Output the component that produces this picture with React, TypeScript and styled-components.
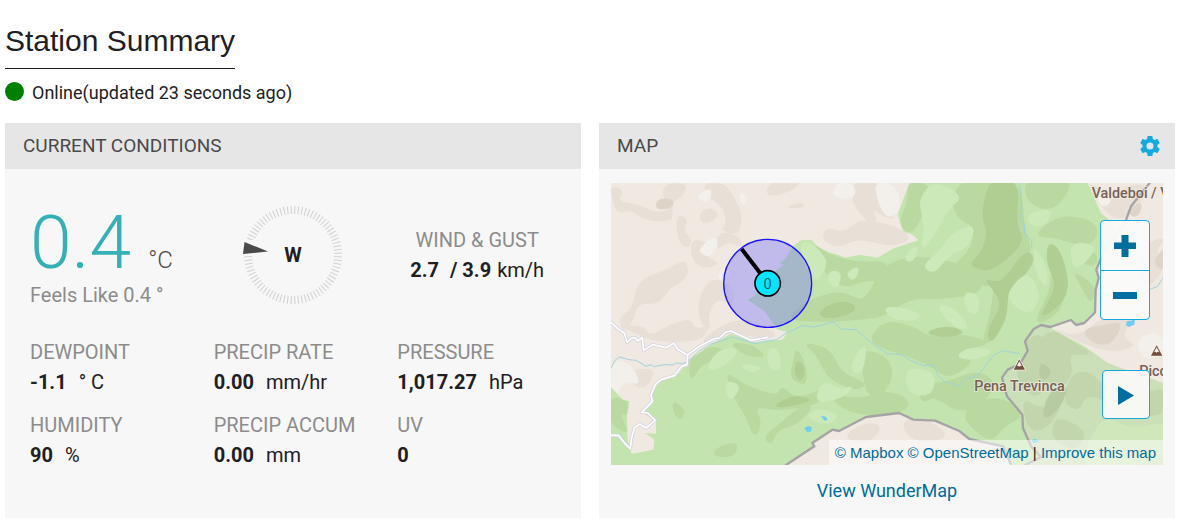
import React from "react";
import styled, { createGlobalStyle } from "styled-components";

const GlobalStyle = createGlobalStyle`
  *, *::before, *::after { box-sizing: border-box; }
  body {
    margin: 0;
    background: #fff;
    color: #1e2023;
    font-family: Roboto, "Liberation Sans", sans-serif;
  }
`;

const Page = styled.main`
  padding: 20px 5px 7px;
`;

const Title = styled.h1`
  display: inline-block;
  margin: 0;
  padding-bottom: 6px;
  border-bottom: 1px solid #1e2023;
  font: 400 30px/42px "Liberation Sans", Arial, sans-serif;
`;

const Status = styled.p`
  display: flex;
  align-items: flex-start;
  gap: 8px;
  margin: 12px 0 18px;
  font-size: 18px;
  line-height: 24px;
`;

const StatusDot = styled.span`
  width: 19px;
  height: 19px;
  margin-top: 1px;
  border-radius: 50%;
  background: #008000;
`;

const Panels = styled.div`
  display: grid;
  grid-template-columns: 1fr 1fr;
  gap: 18px;
`;

const Panel = styled.section`
  background: #f7f7f7;
`;

const PanelHeader = styled.header`
  display: flex;
  align-items: center;
  justify-content: space-between;
  height: 46px;
  padding: 0 13px 0 18px;
  background: #e6e6e6;
`;

const PanelTitle = styled.h2`
  margin: 0;
  color: #4a4a4a;
  font-size: 19px;
  font-weight: 400;
  line-height: 24px;
`;

const IconButton = styled.button`
  display: flex;
  padding: 0;
  border: 0;
  background: none;
  color: #15a9e0;
  cursor: pointer;
`;

const Conditions = styled.div`
  display: grid;
  grid-template-columns: repeat(3, 1fr);
  row-gap: 13px;
  padding: 31px 0 48px 25px;
`;

const Temperature = styled.div`
  display: flex;
  flex-direction: column;
  height: 124px;
`;

const TempReading = styled.div`
  display: flex;
  align-items: baseline;
  gap: 17px;
  height: 80px;
  color: #35b0b5;
  font-size: 75px;
  font-weight: 300;
  line-height: 84px;
  white-space: nowrap;
`;

const TempUnit = styled.span`
  color: #4a4a4a;
  font-size: 24px;
  line-height: 24px;
`;

const Label = styled.div`
  color: #8c8c8c;
  font-size: 20px;
  line-height: 30px;
`;

const Value = styled.div<{ $centered?: boolean; $gap: number }>`
  display: flex;
  justify-content: ${(p) => (p.$centered ? "center" : "flex-start")};
  gap: ${(p) => p.$gap}px;
  font-size: 20px;
  line-height: 30px;
  white-space: pre;
`;

const CompassCell = styled.div`
  padding-left: 24px;
`;

const Wind = styled.div`
  padding: 25px 24px 0 0;
  text-align: center;
`;

const MapBody = styled.div`
  padding: 14px 12px 14px;
`;

const MapFrame = styled.div`
  position: relative;
  overflow: hidden;
  height: 282px;
`;

const MapDrawing = styled.svg`
  display: block;
  width: 100%;
  height: 100%;
`;

const ZoomControls = styled.div`
  position: absolute;
  top: 37px;
  right: 13px;
  width: 50px;
  border: 1px solid #15a9e0;
  border-radius: 4px;
  background: rgba(250, 250, 250, 0.96);
`;

const MapButton = styled.button`
  display: flex;
  align-items: center;
  justify-content: center;
  width: 100%;
  height: 49px;
  padding: 0;
  border: 0;
  background: none;
  color: #006fa0;
  cursor: pointer;

  & + & {
    border-top: 1px solid #15a9e0;
  }
`;

const PlayButton = styled(MapButton)`
  position: absolute;
  top: 187px;
  right: 13px;
  width: 48px;
  border: 1px solid #15a9e0;
  border-radius: 4px;
  background: rgba(250, 250, 247, 0.94);
`;

const Attribution = styled.div`
  position: absolute;
  right: 0;
  bottom: 0;
  padding: 0 7px 0 6px;
  background: rgba(255, 255, 255, 0.5);
  font: 15px/25px "Liberation Sans", Arial, sans-serif;
`;

const Link = styled.a`
  color: #006c9b;
  text-decoration: none;
`;

const MapFooter = styled.div`
  padding-top: 12px;
  font-size: 18px;
  line-height: 27px;
  text-align: center;
`;

const readings = [
  { label: "DEWPOINT", value: "-1.1", unit: "° C" },
  { label: "PRECIP RATE", value: "0.00", unit: "mm/hr" },
  { label: "PRESSURE", value: "1,017.27", unit: "hPa" },
  { label: "HUMIDITY", value: "90", unit: "%" },
  { label: "PRECIP ACCUM", value: "0.00", unit: "mm" },
  { label: "UV", value: "0", unit: "" },
];

const TICKS = 80;

function Compass() {
  return (
    <svg width="110" height="110" viewBox="0 0 110 110" role="img" aria-label="Wind from W">
      {Array.from({ length: TICKS }, (_, i) => (
        <line
          key={i}
          x1="55"
          y1="6"
          x2="55"
          y2="14"
          stroke="#d0d0d0"
          transform={`rotate(${((i + 0.5) * 360) / TICKS} 55 55)`}
        />
      ))}
      <path d="M2 40h16l12 11-12 5H2z" fill="#f7f7f7" />
      <path d="M6.5 42 30 51.5 5 54z" fill="#4a4a4a" />
      <text x="55" y="62" textAnchor="middle" fontSize="20" fontWeight="700" fill="#1e2023">
        W
      </text>
    </svg>
  );
}

const FOREST =
  "M895 0 860 95 876 145 905 155 922 172 850 195 800 224 745 215 705 224 650 206 620 190 600 170 570 172 545 190 525 225 505 240 518 245 495 262 430 340 410 350 460 385 485 420 500 440 530 447 515 470 430 478 360 452 300 485 230 535 205 570 150 595 120 630 122 655 95 688 135 715 135 752 102 750 130 770 128 800 62 812 50 770 48 700 55 655 35 650 0 612V846H525L608 790 604 780 664 740 684 744 765 702 828 693 864 690 907 708 972 712 1040 742 1075 767 1177 790 1198 846H1656V600L1600 580 1550 565 1490 540 1420 490 1320 436 1378 411 1395 425 1420 420 1452 390 1454 320 1463 285 1456 260 1467 220 1520 170 1500 115 1470 90 1430 0Z";

const PARK =
  "M1320 436 1290 430 1268 438 1242 475 1250 503 1228 542 1190 560 1173 584 1188 640 1234 695 1236 735 1260 790 1290 822 1242 846H1656V600L1490 540Z";

const BORDER =
  "M525 846 610 790 604 780 664 740 684 744 765 702 864 690 907 710 972 713 1045 744 1075 768 1177 790 1200 846M1616 0 1560 70 1540 125 1480 200 1456 260 1463 285 1454 320 1452 388 1420 420 1395 426 1380 411 1318 432 1290 426 1268 438 1242 475 1250 503 1228 542 1190 560 1173 584 1188 640 1234 695 1236 735 1260 790 1290 822 1242 846";

const ROADS =
  "M470 463 420 472 360 444 345 447 325 465 310 467 265 490 230 515 228 545 212 550 190 578 150 590 133 605 120 635 124 655 92 688 110 690 133 712 105 735 86 723 70 735 62 765 58 797 45 785 22 757 0 757M0 418 20 437 40 450 48 478 62 465 74 465 80 474 94 464 98 502 125 485 165 494 188 480 200 498 228 516";

const STREAMS =
  "M0 556 12 532 25 522 55 530 75 532 105 550 120 545 130 551 160 545 185 546 195 540 215 542 232 534 265 504 300 483 365 462 410 475 430 482 455 476 497 470 525 450 575 428 610 432 668 417 690 438 735 440 775 475 828 512 870 515 895 530 935 548 968 546 980 575 1000 595 1045 610 1070 585 1100 578 1150 515 1175 503 1225 512M1222 0 1230 25 1233 80 1226 108 1240 125 1240 148 1262 175 1262 195M1656 285 1640 310 1610 322 1580 345 1560 400";

/* Terrain shading: every string is one closed outline, drawn with rounded corners. */
const SAND_SHADE = [
  "0 40 0 8 40 20 20 55 90 65 130 90 180 80 150 30 170 0 230 0 215 40 180 60 190 110 140 118 90 105 60 80 20 95",
  "275 0 290 40 340 75 345 130 325 140 385 160 395 85 360 30 340 0",
  "195 90 235 110 215 140 245 170 230 200 198 170",
  "260 95 295 70 330 95 280 130",
  "470 0 465 40 515 35 570 5 555 -10",
  "720 0 725 70 795 140 795 90 760 45 780 -10",
  "735 0 765 70 845 115 850 90 800 40 800 -10",
  "540 65 575 58 582 76 525 76",
  "645 130 700 150 740 110 830 120 910 160 850 195 740 165 690 195 630 175",
  "80 290 170 260 225 225 235 285 175 315 145 365 80 360 70 410 35 450 22 405 65 375",
  "320 145 385 155 395 195 350 175 315 205",
  "240 165 300 180 280 220 330 240 280 260 240 230",
  "300 280 370 310 370 370 315 345 290 400 300 440 265 420 260 350",
  "25 430 95 425 115 460 175 425 240 405 250 440 300 425 275 470 210 478 130 475 90 460",
  "270 470 350 415 410 410 470 430 505 465 420 466 360 440 290 485",
  "50 560 140 555 105 620 60 605",
  "1430 -10 1500 45 1560 0 1620 10 1575 80 1520 120 1450 50",
  "1670 160 1630 210 1670 250 1600 330 1580 250 1600 180",
  "1310 430 1400 465 1480 395 1570 405 1530 460 1580 490 1500 510 1410 480",
  "890 700 960 715 1020 760 930 785 870 740",
  "690 765 760 715 820 730 770 785",
];

const SAND_LIGHT = [
  "270 25 305 15 295 60 258 50",
  "390 25 410 40 403 70 385 50",
  "655 35 690 -10 740 15 720 55",
  "790 -10 860 10 870 80 830 110 800 60",
  "265 195 305 160 325 175 300 225 268 212",
  "325 265 355 245 358 280 320 295",
  "10 530 65 545 90 610 40 590 10 650 -10 580",
  "1450 20 1510 50 1470 80",
  "1570 470 1640 440 1670 500 1600 540",
];

const SAND_DEEP = [
  "1670 180 1620 240 1670 270",
  "1410 440 1480 425 1540 415 1500 490 1440 480",
  "1540 85 1600 50 1580 110",
  "140 45 192 48 182 78 130 80",
];

const GREEN_DARK = [
  "600 175 650 215 750 240 828 230 850 300 760 290 700 320 630 260",
  "590 350 690 320 760 360 800 270 860 225 960 220 1100 260 1120 330 1000 350 900 345 820 400 760 410 640 418 520 412",
  "890 -10 890 60 860 120 900 160 940 90 970 10",
  "1060 -20 1020 50 1040 110 1090 130 1080 200 1010 260 1090 310 1180 310 1270 220 1240 140 1230 -20",
  "1240 -20 1245 60 1330 90 1400 -20",
  "1260 160 1350 90 1470 120 1440 200 1340 165",
  "1350 185 1320 280 1370 320 1340 400 1260 430 1330 300 1300 190",
  "1390 200 1460 205 1455 255 1400 235",
  "1380 260 1460 310 1440 370 1410 310",
  "1150 280 1230 260 1180 360 1190 410 1140 480 1110 480 1140 390",
  "820 410 910 430 960 465 1050 450 1150 480 1060 500 1090 540 1010 590 960 550 890 520 820 500 770 470",
  "230 535 280 490 345 495 320 530 270 545 240 600",
  "350 475 430 485 470 525 400 520",
  "555 490 585 540 590 610 535 590 545 540",
  "570 475 660 495 690 570 770 600 740 625 650 590 620 520",
  "750 495 830 520 850 580 810 645 765 635 755 570",
  "340 560 400 605 500 640 510 605 560 650 655 605 630 665 500 685 430 670 455 720 430 770 405 700 370 650",
  "650 625 740 650 830 620 900 650 880 690 780 700 690 680",
  "510 720 570 665 610 670 560 725 500 740 480 790 455 760",
  "-10 640 55 650 48 700 25 690 60 760 -10 720",
  "185 650 225 680 210 715 185 690",
  "320 790 385 775 370 825 300 820",
  "920 600 1000 600 1100 560 1160 600 1110 670 1040 690 970 640 930 665",
  "1050 690 1130 640 1200 655 1240 700 1180 730 1140 780 1085 740",
];

const GREEN_OLIVE = [
  "630 375 700 350 745 375 690 405 625 405",
  "1130 0 1110 100 1130 150 1110 210 1070 245 1130 270 1200 220 1240 170 1215 120 1225 10 1180 -20",
  "1110 280 1170 305 1240 200 1275 220 1250 270 1190 320 1190 400 1140 490 1125 440 1180 360",
  "1310 175 1350 200 1380 320 1330 385 1280 405 1340 310 1305 240",
  "935 450 1010 425 1070 450 1000 465",
  "490 665 550 635 610 650 550 668 500 675",
  "560 525 585 560 570 600 548 570",
];

const GREEN_LIGHT = [
  "655 260 695 268 680 320 648 300",
  "560 190 590 170 640 215 650 250 610 310",
  "700 270 750 245 730 300",
  "920 50 970 -10 1060 40 1010 80 975 150 930 210 940 120",
  "1020 150 1095 120 1075 190 1010 220 970 275 930 250 990 200",
  "925 195 905 240 875 230 905 190",
  "1250 90 1330 75 1300 135 1250 125",
  "1265 180 1310 250 1310 320 1270 270",
  "1195 320 1240 270 1270 290 1290 350 1250 400 1190 350",
  "970 370 1020 365 1080 430 1040 445",
  "1375 175 1460 185 1430 235 1385 265",
  "810 370 900 375 940 410 850 415",
  "465 500 500 490 515 560 475 565",
  "380 540 460 550 420 575",
  "630 590 690 620 730 605 700 645 610 665",
  "740 500 770 485 755 575 715 565",
  "580 700 620 675 690 695 650 730",
  "335 590 395 605 355 665",
  "325 495 395 495 330 560 280 560",
  "880 550 975 565 965 640 890 635",
  "1080 490 1160 505 1080 535 1030 520",
  "1060 320 1110 340 1100 400 1060 380",
];

const PARK_SHADE = [
  "1310 430 1420 485 1440 520 1370 510 1390 570 1340 630 1300 580 1270 510",
  "1230 490 1290 440 1330 540 1290 650 1230 620 1215 560",
  "1390 560 1460 575 1510 670 1430 630 1400 690 1350 650",
  "1230 640 1290 680 1360 655 1310 740 1250 745",
  "1330 695 1430 740 1400 810 1320 770",
  "1490 590 1580 635 1670 610 1670 695 1560 705",
];

const PARK_DEEP = [
  "1310 625 1375 600 1350 675 1290 720",
  "1285 530 1330 570 1285 600",
];

const PARK_LIGHT = ["1430 780 1480 695 1560 740 1680 710 1680 810 1540 860 1410 860"];

function smoothOutline(points: string) {
  const n = points.split(" ").map(Number);
  const count = n.length / 2;
  const at = (i: number) => [n[(i % count) * 2], n[(i % count) * 2 + 1]];
  const mid = (i: number) => {
    const [ax, ay] = at(i);
    const [bx, by] = at(i + 1);
    return `${(ax + bx) / 2} ${(ay + by) / 2}`;
  };
  let d = `M${mid(0)}`;
  for (let i = 1; i <= count; i += 1) {
    d += `Q${at(i).join(" ")} ${mid(i)}`;
  }
  return d + "Z";
}

function Terrain({ outlines, fill, opacity = 1 }: { outlines: string[]; fill: string; opacity?: number }) {
  return (
    <g fill={fill} opacity={opacity}>
      {outlines.map((o) => (
        <path key={o} d={smoothOutline(o)} />
      ))}
    </g>
  );
}

function Peak({ x, y }: { x: number; y: number }) {
  return (
    <g transform={`translate(${x} ${y})`}>
      <path d="M0-16 17 15H-17Z" fill="#70503c" stroke="#f5efe8" strokeWidth="5" paintOrder="stroke" />
      <path d="M0-10 8 5 3 3 0 6-4 3-8 5Z" fill="#f7f3ef" />
    </g>
  );
}

function TerrainMap() {
  return (
    <MapDrawing viewBox="0 0 1656 846" preserveAspectRatio="xMidYMid slice" role="img" aria-label="Terrain map around the station">
      <defs>
        <clipPath id="forest">
          <path d={FOREST} />
        </clipPath>
        <clipPath id="park">
          <path d={PARK} />
        </clipPath>
      </defs>
      <rect width="1656" height="846" fill="#f0e9e2" />
      <Terrain outlines={SAND_SHADE} fill="#e8e0d7" />
      <Terrain outlines={SAND_LIGHT} fill="#f3efeb" />
      <Terrain outlines={SAND_DEEP} fill="#dfd4c8" />
      <path d={FOREST} fill="#c3e4ae" />
      <g clipPath="url(#forest)">
        <Terrain outlines={GREEN_DARK} fill="#b9d9a1" />
        <Terrain outlines={GREEN_OLIVE} fill="#aeca90" opacity={0.85} />
        <Terrain outlines={GREEN_LIGHT} fill="#cce9b9" />
      </g>
      <g clipPath="url(#park)">
        <path d={PARK} fill="#cbdfb8" />
        <Terrain outlines={PARK_SHADE} fill="#c2d5ac" />
        <Terrain outlines={PARK_DEEP} fill="#b8caa1" />
        <Terrain outlines={PARK_LIGHT} fill="#d0e6bb" />
      </g>
      <g fill="none" strokeLinejoin="round" strokeLinecap="round">
        <path d={STREAMS} stroke="#a2d2dc" strokeWidth="3" />
        <path d={BORDER} stroke="#a6a3a6" strokeWidth="7" />
        <path d={ROADS} stroke="#d4d3de" strokeWidth="10" />
        <path d={ROADS} stroke="#fff" strokeWidth="5" />
      </g>
      <path d="M580 736 592 729 602 732 600 746 588 747ZM630 698 645 701 650 711 640 713ZM1548 415 1572 410 1570 425 1553 432 1545 427ZM1262 770 1275 768 1285 777 1265 780Z" fill="#70ccf2" />
      <g fill="#786154" stroke="#f3eee6" strokeOpacity="0.7" strokeWidth="6" strokeLinejoin="round" paintOrder="stroke" fontFamily="Roboto, sans-serif" fontSize="43" fontWeight="500">
        <text x="1442" y="46">Valdeboi / V</text>
        <text x="1090" y="623">Pena Trevinca</text>
        <text x="1585" y="579">Pico</text>
      </g>
      <Peak x={1225} y={545} />
      <Peak x={1637} y={503} />
      <circle cx="470" cy="301" r="132" fill="#6a66ff" fillOpacity="0.35" stroke="#1c12ff" strokeWidth="4" />
      <path d="M392 198 448 271" stroke="#000" strokeWidth="12" />
      <circle cx="470" cy="301" r="38" fill="#00e7ff" stroke="#000" strokeWidth="5" />
      <text x="470" y="317" textAnchor="middle" fontFamily="Roboto, sans-serif" fontSize="44" fill="#22596a">0</text>
    </MapDrawing>
  );
}

export default function App() {
  return (
    <>
      <GlobalStyle />
      <Page>
        <Title>Station Summary</Title>
        <Status>
          <StatusDot />
          Online(updated 23 seconds ago)
        </Status>
        <Panels>
          <Panel>
            <PanelHeader>
              <PanelTitle>CURRENT CONDITIONS</PanelTitle>
            </PanelHeader>
            <Conditions>
              <Temperature>
                <TempReading>
                  0.4
                  <TempUnit>°C</TempUnit>
                </TempReading>
                <Label>Feels Like 0.4 °</Label>
              </Temperature>
              <CompassCell>
                <Compass />
              </CompassCell>
              <Wind>
                <Label>WIND &amp; GUST</Label>
                <Value $centered $gap={6}>
                  <b>2.7</b>
                  <b> / 3.9</b>
                  <span>km/h</span>
                </Value>
              </Wind>
              {readings.map((r) => (
                <div key={r.label}>
                  <Label>{r.label}</Label>
                  <Value $gap={12}>
                    <b>{r.value}</b>
                    <span>{r.unit}</span>
                  </Value>
                </div>
              ))}
            </Conditions>
          </Panel>
          <Panel>
            <PanelHeader>
              <PanelTitle>MAP</PanelTitle>
              <IconButton type="button" aria-label="Map settings">
                <svg width="24" height="24" viewBox="0 0 24 24" fill="currentColor">
                  <path d="M19.43 12.98c.04-.32.07-.64.07-.98s-.03-.66-.07-.98l2.11-1.65c.19-.15.24-.42.12-.64l-2-3.46c-.12-.22-.39-.3-.61-.22l-2.49 1c-.52-.4-1.08-.73-1.69-.98l-.38-2.65A.49.49 0 0 0 14 2h-4c-.25 0-.46.18-.49.42l-.38 2.65c-.61.25-1.17.59-1.69.98l-2.49-1c-.23-.09-.49 0-.61.22l-2 3.46c-.13.22-.07.49.12.64l2.11 1.65c-.04.32-.07.65-.07.98s.03.66.07.98l-2.11 1.65c-.19.15-.24.42-.12.64l2 3.46c.12.22.39.3.61.22l2.49-1c.52.4 1.08.73 1.69.98l.38 2.65c.03.24.24.42.49.42h4c.25 0 .46-.18.49-.42l.38-2.65c.61-.25 1.17-.59 1.69-.98l2.49 1c.23.09.49 0 .61-.22l2-3.46c.12-.22.07-.49-.12-.64zM12 15.5a3.5 3.5 0 1 1 0-7 3.5 3.5 0 0 1 0 7z" />
                </svg>
              </IconButton>
            </PanelHeader>
            <MapBody>
              <MapFrame>
                <TerrainMap />
                <ZoomControls>
                  <MapButton type="button" aria-label="Zoom in">
                    <svg width="24" height="24" viewBox="0 0 24 24" fill="currentColor">
                      <path d="M8.500 1h7v7.500H23v6.500h-7.500v8h-7v-8H1V8.500h7.500z" />
                    </svg>
                  </MapButton>
                  <MapButton type="button" aria-label="Zoom out">
                    <svg width="26" height="24" viewBox="0 0 26 24" fill="currentColor">
                      <path d="M1 9h24v7H1z" />
                    </svg>
                  </MapButton>
                </ZoomControls>
                <PlayButton type="button" aria-label="Play">
                  <svg width="18" height="20" viewBox="0 0 18 20" fill="currentColor">
                    <path d="M1 1v19l16-9.500z" />
                  </svg>
                </PlayButton>
                <Attribution>
                  <Link href="#mapbox">© Mapbox</Link> <Link href="#osm">© OpenStreetMap</Link> |{" "}
                  <Link href="#improve">Improve this map</Link>
                </Attribution>
              </MapFrame>
              <MapFooter>
                <Link href="#wundermap">View WunderMap</Link>
              </MapFooter>
            </MapBody>
          </Panel>
        </Panels>
      </Page>
    </>
  );
}
